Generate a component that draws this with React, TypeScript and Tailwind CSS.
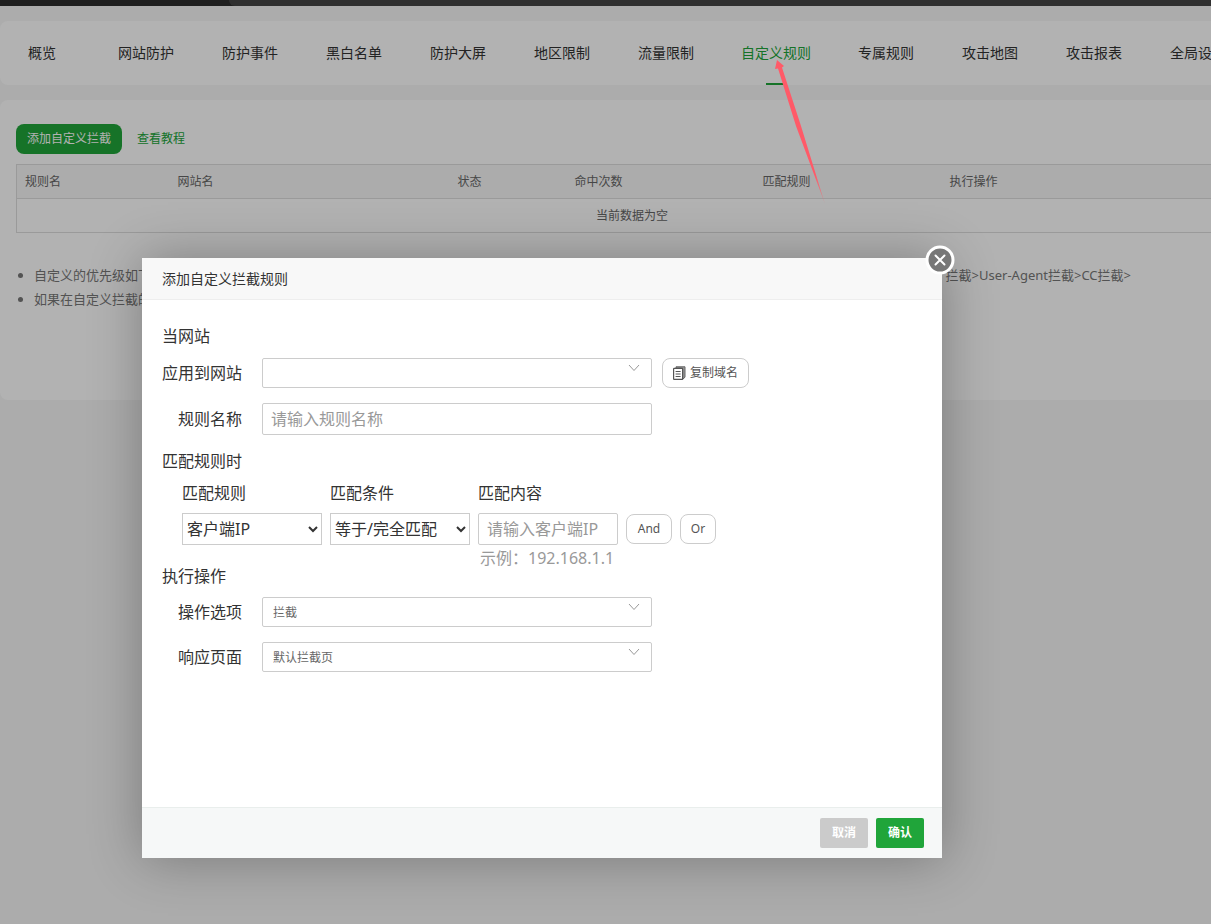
import { useState } from 'react';
import type { ReactNode } from 'react';

const tabs = [
  '概览',
  '网站防护',
  '防护事件',
  '黑白名单',
  '防护大屏',
  '地区限制',
  '流量限制',
  '自定义规则',
  '专属规则',
  '攻击地图',
  '攻击报表',
  '全局设置',
];

const columns = [
  { label: '规则名', width: 'w-[153px]' },
  { label: '网站名', width: 'w-[280px]' },
  { label: '状态', width: 'w-[117px]' },
  { label: '命中次数', width: 'w-[188px]' },
  { label: '匹配规则', width: 'w-[187px]' },
  { label: '执行操作', width: 'w-[306px]' },
];

function TabBar() {
  const [active, setActive] = useState('自定义规则');

  return (
    <nav className="h-16 overflow-hidden rounded-l-lg bg-white">
      <div className="-ml-[10px] flex">
        {tabs.map((tab) => (
          <button
            key={tab}
            type="button"
            onClick={() => setActive(tab)}
            className={`relative h-16 min-w-[104px] shrink-0 whitespace-nowrap px-[23px] text-sm ${
              tab === active ? 'text-[#20a53a]' : 'text-[#333]'
            }`}
          >
            {tab}
            {tab === active && (
              <span className="absolute bottom-0 left-1/2 h-0.5 w-5 -translate-x-1/2 bg-[#20a53a]" />
            )}
          </button>
        ))}
      </div>
    </nav>
  );
}

function RulesPanel() {
  return (
    <main className="mt-[15px] h-[300px] overflow-hidden rounded-l-lg bg-white px-4 pt-6">
      <div className="flex items-center gap-[15px] text-xs">
        <button type="button" className="h-[30px] rounded-lg bg-[#20a53a] px-[11px] text-white">
          添加自定义拦截
        </button>
        <a href="#tutorial" className="text-[#20a53a]">
          查看教程
        </a>
      </div>

      <table className="mt-[10px] w-[1231px] table-fixed border-collapse border border-[#ddd] text-xs text-[#666]">
        <thead>
          <tr className="h-[34px] border-b border-[#ddd] bg-[#f6f6f6]">
            {columns.map((col) => (
              <th key={col.label} className={`${col.width} px-2 text-left font-normal`}>
                {col.label}
              </th>
            ))}
          </tr>
        </thead>
        <tbody>
          <tr className="h-[34px]">
            <td colSpan={columns.length} className="text-center">
              当前数据为空
            </td>
          </tr>
        </tbody>
      </table>

      <ul className="mt-[30px] w-[1115px] list-disc pl-[18px] text-[13px] leading-6 text-[#777]">
        <li>
          <div className="flex justify-between">
            <span>自定义的优先级如下</span>
            <span>拦截&gt;User-Agent拦截&gt;CC拦截&gt;</span>
          </div>
        </li>
        <li>如果在自定义拦截的</li>
      </ul>
    </main>
  );
}

function FormRow({ id, label, children }: { id: string; label: string; children: ReactNode }) {
  return (
    <div className="flex items-center">
      <label htmlFor={id} className="w-20 shrink-0 text-right">
        {label}
      </label>
      <div className="ml-5 flex items-center gap-[10px]">{children}</div>
    </div>
  );
}

function DropDown({ id, options }: { id: string; options: string[] }) {
  return (
    <div className="relative">
      <select
        id={id}
        className="block h-[30px] w-[390px] appearance-none rounded-xs border border-[#ccc] bg-white px-[10px] pt-0.5 text-xs text-[#666]"
      >
        {options.map((o) => (
          <option key={o}>{o}</option>
        ))}
      </select>
      <svg
        className="pointer-events-none absolute right-3 top-1.5 h-2 w-3"
        viewBox="0 0 12 8"
        fill="none"
        stroke="#999"
      >
        <path d="M1 1l5 5.5L11 1" />
      </svg>
    </div>
  );
}

function CopyIcon() {
  return (
    <svg className="h-[14px] w-[13px]" viewBox="0 0 13 14" fill="none" stroke="#555">
      <path d="M3 2.2V.8h9v10.4l-2.4 2.2V2.4z" fill="#999" stroke="#666" />
      <rect x=".6" y="2.4" width="9" height="11" rx=".5" fill="#fff" strokeWidth="1.2" />
      <path d="M2.6 5.5h5M2.6 8h5M2.6 10.5h5" />
    </svg>
  );
}

function RuleDialog() {
  return (
    <div
      role="dialog"
      aria-labelledby="dialog-title"
      className="relative flex h-[600px] w-[800px] shrink-0 flex-col bg-white text-base text-[#333] shadow-[1px_1px_50px_rgba(0,0,0,0.3)]"
    >
      <h2
        id="dialog-title"
        className="h-[42px] border-b border-[#eee] bg-[#f8f8f8] px-5 text-sm leading-[42px]"
      >
        添加自定义拦截规则
      </h2>
      <button type="button" aria-label="关闭" className="absolute -right-[13px] -top-[13px]">
        <svg className="block h-[30px] w-[30px]" viewBox="0 0 30 30">
          <circle cx="15" cy="15" r="13" fill="#777" stroke="#fff" strokeWidth="3" />
          <path d="M10.5 10.5l9 9M19.5 10.5l-9 9" stroke="#fff" strokeWidth="2" strokeLinecap="round" />
        </svg>
      </button>

      <form className="flex-1 px-5 pt-6 leading-6">
        <h3>当网站</h3>
        <div className="mt-[10px] flex flex-col gap-[15px]">
          <FormRow id="site" label="应用到网站">
            <DropDown id="site" options={['']} />
            <button
              type="button"
              className="flex h-[30px] items-center gap-1 rounded-lg border border-[#ccc] px-[10px] text-xs text-[#555]"
            >
              <CopyIcon />
              复制域名
            </button>
          </FormRow>
          <FormRow id="rule-name" label="规则名称">
            <input
              id="rule-name"
              type="text"
              placeholder="请输入规则名称"
              className="h-8 w-[390px] rounded-xs border border-[#ccc] px-2 placeholder:text-[#999]"
            />
          </FormRow>
        </div>

        <h3 className="mt-[14px]">匹配规则时</h3>
        <div className="mt-2 flex items-end gap-2 pl-5">
          <div className="flex w-[140px] flex-col gap-2">
            <label htmlFor="match-rule">匹配规则</label>
            <select id="match-rule" className="h-8 border border-[#ccc] bg-white">
              <option>客户端IP</option>
            </select>
          </div>
          <div className="flex w-[140px] flex-col gap-2">
            <label htmlFor="match-condition">匹配条件</label>
            <select id="match-condition" className="h-8 border border-[#ccc] bg-white">
              <option>等于/完全匹配</option>
            </select>
          </div>
          <div className="flex w-[140px] flex-col gap-2">
            <label htmlFor="match-content">匹配内容</label>
            <input
              id="match-content"
              type="text"
              placeholder="请输入客户端IP"
              className="h-8 rounded-xs border border-[#ccc] px-2 placeholder:text-[#999]"
            />
          </div>
          <div className="flex h-8 items-center gap-2 text-xs text-[#555]">
            <button type="button" className="h-[30px] w-[46px] rounded-lg border border-[#ccc]">
              And
            </button>
            <button type="button" className="h-[30px] w-9 rounded-lg border border-[#ccc]">
              Or
            </button>
          </div>
        </div>
        <p className="-mb-[7px] pl-[318px] leading-[26px] text-[#999]">示例：192.168.1.1</p>

        <h3>执行操作</h3>
        <div className="mt-[9px] flex flex-col gap-[15px]">
          <FormRow id="action" label="操作选项">
            <DropDown id="action" options={['拦截']} />
          </FormRow>
          <FormRow id="response" label="响应页面">
            <DropDown id="response" options={['默认拦截页']} />
          </FormRow>
        </div>
      </form>

      <footer className="flex h-[51px] items-center justify-end gap-2 border-t border-[#e9eeec] bg-[#f6f8f8] pr-[18px] text-xs font-bold text-white">
        <button type="button" className="h-[30px] w-12 rounded-xs bg-[#cbcbcb]">
          取消
        </button>
        <button type="button" className="h-[30px] w-12 rounded-xs bg-[#20a53a]">
          确认
        </button>
      </footer>
    </div>
  );
}

export default function App() {
  return (
    <div className="relative min-h-screen overflow-hidden bg-[#f6f7f7] font-['Noto_Sans','Noto_Sans_CJK_SC',sans-serif]">
      <header className="h-1.5 bg-[#2d2d2d] pl-[229px]">
        <div className="h-full rounded-bl-md bg-[#464646]" />
      </header>
      <div className="pt-[15px]">
        <TabBar />
        <RulesPanel />
      </div>

      <div className="absolute inset-0 flex items-start bg-black/30 pl-[142px] pt-[258px]">
        <RuleDialog />
      </div>

      {/* Pointer to the active tab */}
      <svg
        className="pointer-events-none absolute left-[770px] top-[56px] h-[150px] w-[60px]"
        viewBox="0 0 60 150"
      >
        <defs>
          <linearGradient id="tail" x1="0" y1="0" x2="0" y2="1">
            <stop offset="0.8" stopColor="#ff5a68" />
            <stop offset="1" stopColor="#ff5a68" stopOpacity="0.3" />
          </linearGradient>
        </defs>
        <path d="M7 4L14 10L12 11.5L31 70L55 148L26 70L8 12.5L5 13Z" fill="url(#tail)" />
      </svg>
    </div>
  );
}
